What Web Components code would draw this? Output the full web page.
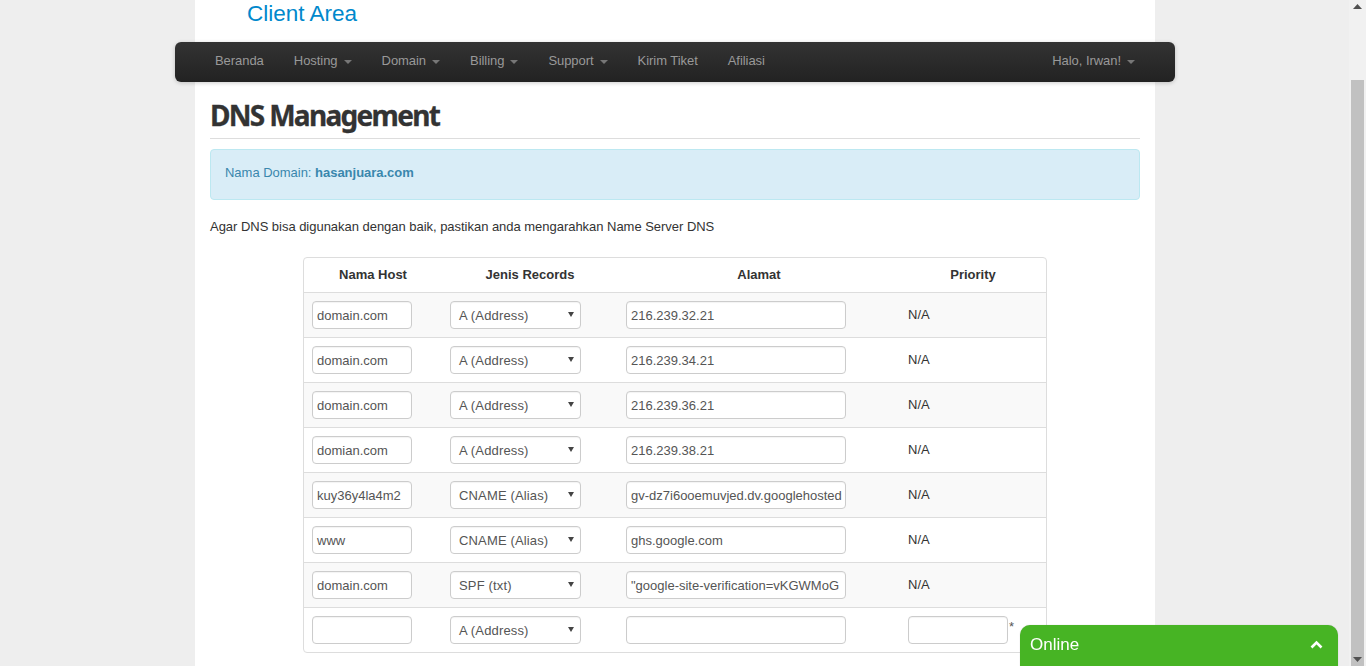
<!DOCTYPE html>
<html lang="id">
<head>
<meta charset="utf-8">
<title>DNS Management</title>
<style>
html,body{margin:0;padding:0;height:100%;overflow:hidden;background:#eee;font:13px/20px "Liberation Sans",Arial,sans-serif;color:#333}
</style>
</head>
<body>
<app-shell>
  <page-header slot="header" title="Client Area"></page-header>
  <top-nav slot="nav">
    <nav-item>Beranda</nav-item>
    <nav-item caret>Hosting</nav-item>
    <nav-item caret>Domain</nav-item>
    <nav-item caret>Billing</nav-item>
    <nav-item caret>Support</nav-item>
    <nav-item>Kirim Tiket</nav-item>
    <nav-item>Afiliasi</nav-item>
    <nav-item slot="right" caret>Halo, Irwan!</nav-item>
  </top-nav>
  <page-title>DNS Management</page-title>
  <info-alert>Nama Domain: <b>hasanjuara.com</b></info-alert>
  <p-text>Agar DNS bisa digunakan dengan baik, pastikan anda mengarahkan Name Server DNS</p-text>
  <dns-table>
    <dns-row host="domain.com" type="A (Address)" addr="216.239.32.21" pri="N/A"></dns-row>
    <dns-row host="domain.com" type="A (Address)" addr="216.239.34.21" pri="N/A"></dns-row>
    <dns-row host="domain.com" type="A (Address)" addr="216.239.36.21" pri="N/A"></dns-row>
    <dns-row host="domian.com" type="A (Address)" addr="216.239.38.21" pri="N/A"></dns-row>
    <dns-row host="kuy36y4la4m2" type="CNAME (Alias)" addr="gv-dz7i6ooemuvjed.dv.googlehosted" pri="N/A"></dns-row>
    <dns-row host="www" type="CNAME (Alias)" addr="ghs.google.com" pri="N/A"></dns-row>
    <dns-row host="domain.com" type="SPF (txt)" addr="&quot;google-site-verification=vKGWMoG" pri="N/A"></dns-row>
    <dns-row type="A (Address)" new></dns-row>
  </dns-table>
</app-shell>
<fake-scrollbar></fake-scrollbar>
<chat-tab>Online</chat-tab>
<script>
function def(name, html, init){
  customElements.define(name, class extends HTMLElement{
    constructor(){super();this.attachShadow({mode:'open'}).innerHTML=html;}
    connectedCallback(){if(init)init(this,this.shadowRoot);}
  });
}
def('app-shell',`<style>
:host{display:block;width:960px;height:666px;margin-left:195px;background:#fff;overflow:visible}
.body{padding:0 15px}
</style><slot name="header"></slot><slot name="nav"></slot><div class="body"><slot></slot></div>`);
def('page-header',`<style>
:host{display:block;height:42px;padding-left:52px;box-sizing:border-box}
div{font-size:22.5px;line-height:28px;color:#0088cc}
</style><div></div>`,(h,s)=>{s.querySelector('div').textContent=h.getAttribute('title')});
def('top-nav',`<style>
:host{display:flex;justify-content:space-between;position:relative;width:1000px;height:40px;margin-left:-20px;padding:0 25px;box-sizing:border-box;border-radius:6px;
background:linear-gradient(#333,#222);box-shadow:0 1px 4px rgba(0,0,0,.2)}
div{display:flex}
</style><div><slot></slot></div><div><slot name="right"></slot></div>`);
def('nav-item',`<style>
:host{display:block;padding:0 15px;color:#999;font-size:13px;letter-spacing:-.05px;line-height:37px;height:40px;box-sizing:border-box}
i{display:inline-block;width:0;height:0;margin-left:6px;vertical-align:middle;margin-top:1px;border:4px solid transparent;border-bottom:0;border-top-color:#777}
</style><slot></slot><i hidden></i>`,(h,s)=>{if(h.hasAttribute('caret'))s.querySelector('i').hidden=false;else s.querySelector('i').remove()});
def('page-title',`<style>
:host{display:block;height:57px;border-bottom:1px solid #ddd;box-sizing:border-box;font:bold 28px/66px "Noto Sans","Open Sans",sans-serif;letter-spacing:-1.7px;color:#333;-webkit-text-stroke:.3px #333}
</style><slot></slot>`);
def('info-alert',`<style>
:host{display:block;box-sizing:border-box;height:51px;margin-top:10px;padding:13px 14px;background:#d9edf7;border:1px solid #bce8f1;border-radius:4px;color:#3a87ad;letter-spacing:-.02px}
</style><slot></slot>`);
def('p-text',`<style>
:host{display:block;margin-top:17px;height:20px;color:#333;letter-spacing:-.03px}
</style><slot></slot>`);
def('dns-table',`<style>
:host{display:block;box-sizing:border-box;width:744px;margin:20px 0 0 93px;border:1px solid #ddd;border-radius:4px;background:#fff}
.head{display:grid;grid-template-columns:138px 176px 282px 146px;height:34px;font-weight:bold;text-align:center;line-height:34px}
::slotted(dns-row:nth-child(odd)){background:#f9f9f9}
</style><div class="head"><span>Nama Host</span><span>Jenis Records</span><span>Alamat</span><span>Priority</span></div><slot></slot>`);
def('dns-row',`<style>
:host{display:grid;grid-template-columns:138px 176px 282px 146px;height:45px;box-sizing:border-box;border-top:1px solid #ddd;align-items:start;padding-top:8px}
.f{box-sizing:border-box;height:28px;border:1px solid #ccc;border-radius:4px;background:#fff;color:#555;line-height:28px;padding:0 4px;white-space:nowrap;overflow:hidden;box-shadow:inset 0 1px 1px rgba(0,0,0,.05)}
.c{padding-left:8px}
.host{width:100px}
.type{width:131px;padding:0 8px;position:relative;letter-spacing:.15px}
.type::after{content:"";position:absolute;right:6px;top:10px;border:3px solid transparent;border-bottom:0;border-top:5px solid #444}
.addr{width:220px}
.pri{width:100px}
.na{line-height:28px;color:#333}
.star{margin:1px 0 0 1px;line-height:20px;color:#555}
.pc{padding-left:8px;display:flex}
</style>
<div class="c"><div class="f host"></div></div>
<div class="c"><div class="f type"></div></div>
<div class="c"><div class="f addr"></div></div>
<div class="pc"></div>`,(h,s)=>{
  const a=n=>h.getAttribute(n)||'';
  s.querySelector('.host').textContent=a('host');
  s.querySelector('.type').textContent=a('type');
  s.querySelector('.addr').textContent=a('addr');
  const p=s.querySelector('.pc');
  if(h.hasAttribute('new')){p.innerHTML='<div class="f pri"></div><span class="star">*</span>';}
  else{p.innerHTML='<span class="na"></span>';p.firstChild.textContent=a('pri');}
});
def('fake-scrollbar',`<style>
:host{position:fixed;right:0;top:0;bottom:0;width:17px;background:#f1f1f1}
.t{position:absolute;left:2px;right:2px;top:80px;bottom:0;background:#c1c1c1}
svg{position:absolute;left:4px;width:9px;height:5px;fill:#505050}
.up{top:4px}.dn{bottom:4px}
</style><div class="t"></div><svg class="up" viewBox="0 0 9 5"><path d="M4.500 0 9 5H0z"/></svg><svg class="dn" viewBox="0 0 9 5"><path d="M0 0h9L4.500 5z"/></svg>`);
def('chat-tab',`<style>
:host{position:fixed;left:1020px;top:625px;width:318px;height:41px;box-sizing:border-box;display:flex;align-items:center;justify-content:space-between;padding:0 15px 1px 10px;background:#47b424;border-radius:10px 10px 0 0;color:#fff;font-size:17px;box-shadow:0 0 1px rgba(0,0,0,.3)}
svg{width:13px;height:9px;fill:none;stroke:#fff;stroke-width:2.6;transform:translateY(-1px)}
</style><slot></slot><svg viewBox="0 0 13 9"><path d="M1.500 7.500 6.500 2.500l5 5"/></svg>`);
</script>
</body>
</html>
